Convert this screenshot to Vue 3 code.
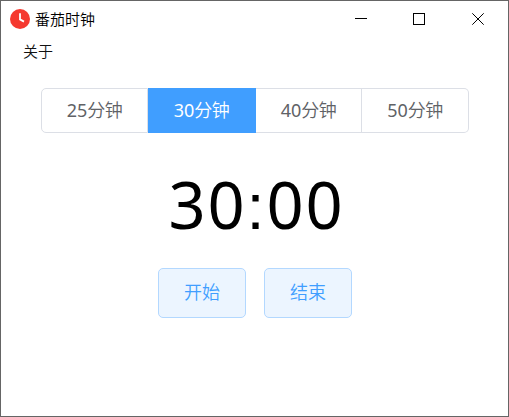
<script setup>
import { ref } from 'vue'

const durations = [25, 30, 40, 50]
const selected = ref(30)
</script>

<template>
  <div class="window">
    <header class="titlebar">
      <svg class="logo" width="20" height="20" viewBox="0 0 20 20">
        <circle cx="10" cy="10" r="10" fill="#f5392f" />
        <path d="M10 4.2V10.4L14 12.6" fill="none" stroke="#fff" stroke-width="1.8" />
      </svg>
      <span class="title">番茄时钟</span>
      <svg class="controls" width="124" height="12" viewBox="0 0 124 12" fill="none" stroke="#000" shape-rendering="crispEdges">
        <path d="M0 5.5H12" />
        <rect x="58.5" y="0.5" width="11" height="11" />
        <path d="M117.3 0.3L128.7 11.7M128.7 0.3L117.3 11.7" shape-rendering="auto" />
      </svg>
    </header>
    <nav class="menu"><span>关于</span></nav>
    <main>
      <div class="segments">
        <button
          v-for="minutes in durations"
          :key="minutes"
          class="segment"
          :class="{ active: minutes === selected }"
          @click="selected = minutes"
        ><span>{{ minutes }}</span><span class="unit">分钟</span></button>
      </div>
      <div class="timer"><span>{{ selected }}</span><span class="colon">:</span><span>00</span></div>
      <div class="actions">
        <button class="action">开始</button>
        <button class="action">结束</button>
      </div>
    </main>
  </div>
</template>

<style>
body {
  margin: 0;
}
</style>

<style scoped>
.window {
  box-sizing: border-box;
  width: 509px;
  height: 417px;
  border: 1px solid #656565;
  background: #fff;
  overflow: hidden;
  font-family: "Noto Sans", "Noto Sans CJK SC", sans-serif;
}
.titlebar {
  display: flex;
  align-items: center;
  height: 36px;
  padding: 0 29px 0 9px;
}
.title {
  margin-left: 5px;
  font: 350 15px/20px "Noto Sans CJK SC", sans-serif;
  color: #000;
}
.controls {
  margin-left: auto;
  overflow: visible;
}
.menu {
  height: 28px;
  padding-left: 22px;
  font: 350 15px/28px "Noto Sans CJK SC", sans-serif;
  color: #111;
}
main {
  display: flex;
  flex-direction: column;
  align-items: center;
}
button {
  box-sizing: border-box;
  margin: 0;
  padding: 0;
  font-family: inherit;
  font-size: 18px;
}
.segments {
  display: grid;
  grid-template-columns: 107px 108px 106px 107px;
  width: 428px;
  margin-top: 23px;
}
.segment {
  height: 45px;
  padding-left: 1px;
  border: 1px solid #dcdfe6;
  border-left: 0;
  background: #fff;
  color: #606266;
  line-height: 43px;
}
.segment:first-child {
  border-left: 1px solid #dcdfe6;
  border-radius: 5px 0 0 5px;
}
.segment:last-child {
  border-radius: 0 5px 5px 0;
}
.segment.active {
  background: #409eff;
  border-color: #409eff;
  color: #fff;
}
.unit {
  font-weight: 350;
  letter-spacing: -0.5px;
}
.timer {
  display: flex;
  height: 92px;
  margin-top: 27px;
  padding-left: 4px;
  font: 400 65px/88px "Noto Sans", sans-serif;
  letter-spacing: 1.8px;
  color: #000;
}
.colon {
  font-family: "Liberation Sans", sans-serif;
  line-height: 94px;
}
.actions {
  display: flex;
  gap: 18px;
  margin-top: 16px;
}
.action {
  width: 88px;
  height: 50px;
  padding: 0 0 3px 1px;
  border: 1px solid #b3d8ff;
  border-radius: 5px;
  background: #ecf5ff;
  color: #409eff;
  font-weight: 350;
  line-height: 44px;
}
</style>
